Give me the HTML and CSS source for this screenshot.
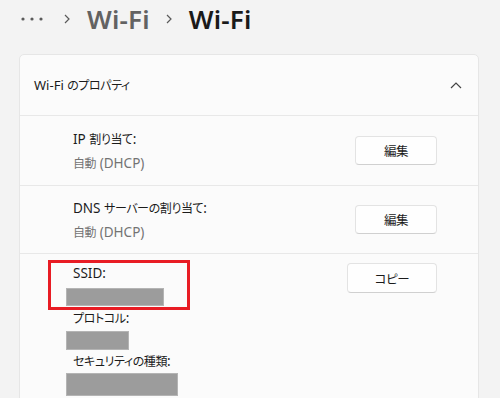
FILE: index.html
```html
<!DOCTYPE html>
<html lang="ja">
<head>
<meta charset="utf-8">
<link rel="stylesheet" href="styles.css">
</head>
<body>
<div class="crumbs">
  <svg class="dots" width="22" height="4" viewBox="0 0 22 4"><circle cx="2" cy="2" r="1.6"/><circle cx="11" cy="2" r="1.6"/><circle cx="20" cy="2" r="1.6"/></svg>
  <svg class="sep" width="6" height="10" viewBox="0 0 6 10"><polyline points="1,1 5,5 1,9"/></svg>
  <span class="crumb">Wi-Fi</span>
  <svg class="sep" width="6" height="10" viewBox="0 0 6 10"><polyline points="1,1 5,5 1,9"/></svg>
  <span class="crumb current">Wi-Fi</span>
</div>

<div class="card">
  <div class="card-head">
    <span class="head-title">Wi-Fi <span class="jp">のプロパティ</span></span>
    <svg class="chev" width="12" height="7" viewBox="0 0 12 7"><polyline points="1,6 6,1 11,6"/></svg>
  </div>
  <div class="row">
    <div class="info">
      <div class="label">IP <span class="jp">割り当て</span>:</div>
      <div class="value"><span class="jp">自動</span> (DHCP)</div>
    </div>
    <button class="btn"><span class="jp">編集</span></button>
  </div>
  <div class="row row2">
    <div class="info">
      <div class="label">DNS <span class="jp">サーバーの割り当て</span>:</div>
      <div class="value"><span class="jp">自動</span> (DHCP)</div>
    </div>
    <button class="btn"><span class="jp">編集</span></button>
  </div>
  <div class="details">
    <div class="props">
      <div class="label">SSID:</div>
      <div class="mask m1"></div>
      <div class="label"><span class="jp">プロトコル</span>:</div>
      <div class="mask m2"></div>
      <div class="label"><span class="jp">セキュリティの種類</span>:</div>
      <div class="mask m3"></div>
    </div>
    <button class="btn copy"><span class="jp">コピー</span></button>
    <div class="highlight"></div>
  </div>
</div>
</body>
</html>
```
FILE: styles.css
```css
html, body {
  margin: 0;
  padding: 0;
  background: #f3f3f3;
  font-family: "Noto Sans", "Noto Sans CJK JP", sans-serif;
  color: #1b1b1b;
  overflow: hidden;
}

.jp {
  font-family: "Noto Sans CJK JP", sans-serif;
  font-size: 12px;
  letter-spacing: -0.4px;
  font-feature-settings: "palt";
}

.crumbs {
  display: flex;
  align-items: center;
  height: 38px;
  padding-left: 21px;
}
.dots { fill: #5a5a5a; margin-right: 21px; }
.sep { fill: none; stroke: #5a5a5a; stroke-width: 1.2; margin-right: 17px; }
.crumb {
  font-size: 26px;
  font-weight: 600;
  color: #626262;
  margin-right: 16px;
  letter-spacing: 0.2px;
}
.crumb.current { color: #1a1a1a; }

.card {
  margin: 16px 21px 0 19px;
  background: #fbfbfb;
  border: 1px solid #e6e6e6;
  border-radius: 5px;
}
.card-head {
  display: flex;
  align-items: center;
  justify-content: space-between;
  height: 60px;
  padding: 0 16px 0 14px;
  border-bottom: 1px solid #e8e8e8;
}
.head-title { font-size: 13px; color: #1b1b1b; }
.chev { fill: none; stroke: #444; stroke-width: 1.2; }

.row {
  display: flex;
  align-items: center;
  justify-content: space-between;
  padding: 0 41px 0 53px;
  border-bottom: 1px solid #e8e8e8;
  box-sizing: border-box;
  height: 70px;
}
.row2 { height: 68px; }
.info { display: flex; flex-direction: column; gap: 4px; }
.label { font-size: 13.5px; line-height: 20px; color: #1b1b1b; }
.value { font-size: 13.5px; line-height: 20px; color: #737373; }

.btn {
  width: 82px;
  height: 29px;
  font-family: inherit;
  font-size: 13px;
  color: #1b1b1b;
  background: #fefefe;
  border: 1px solid #e3e3e3;
  border-bottom-color: #d0d0d0;
  border-radius: 4px;
  padding: 0;
}
.btn .jp { font-size: 12.5px; }

.details {
  position: relative;
  display: flex;
  justify-content: space-between;
  align-items: flex-start;
  padding: 9px 41px 0 53px;
  height: 150px;
}
.props { display: flex; flex-direction: column; }
.mask {
  background: #9c9c9c;
  border: 1px solid #b4b4b4;
  margin-left: -7px;
  box-sizing: border-box;
}
.m1 { width: 98px; height: 18px; margin-top: 5px; margin-bottom: 2px; }
.m2 { width: 63px; height: 19px; margin-top: 3px; margin-bottom: 1px; }
.m3 { width: 112px; height: 23px; margin-top: 2px; }
.copy { width: 90px; height: 30px; }

.highlight {
  position: absolute;
  left: 28px;
  top: 6px;
  width: 142px;
  height: 50px;
  border: 3px solid #e81c24;
  box-sizing: border-box;
}
```
